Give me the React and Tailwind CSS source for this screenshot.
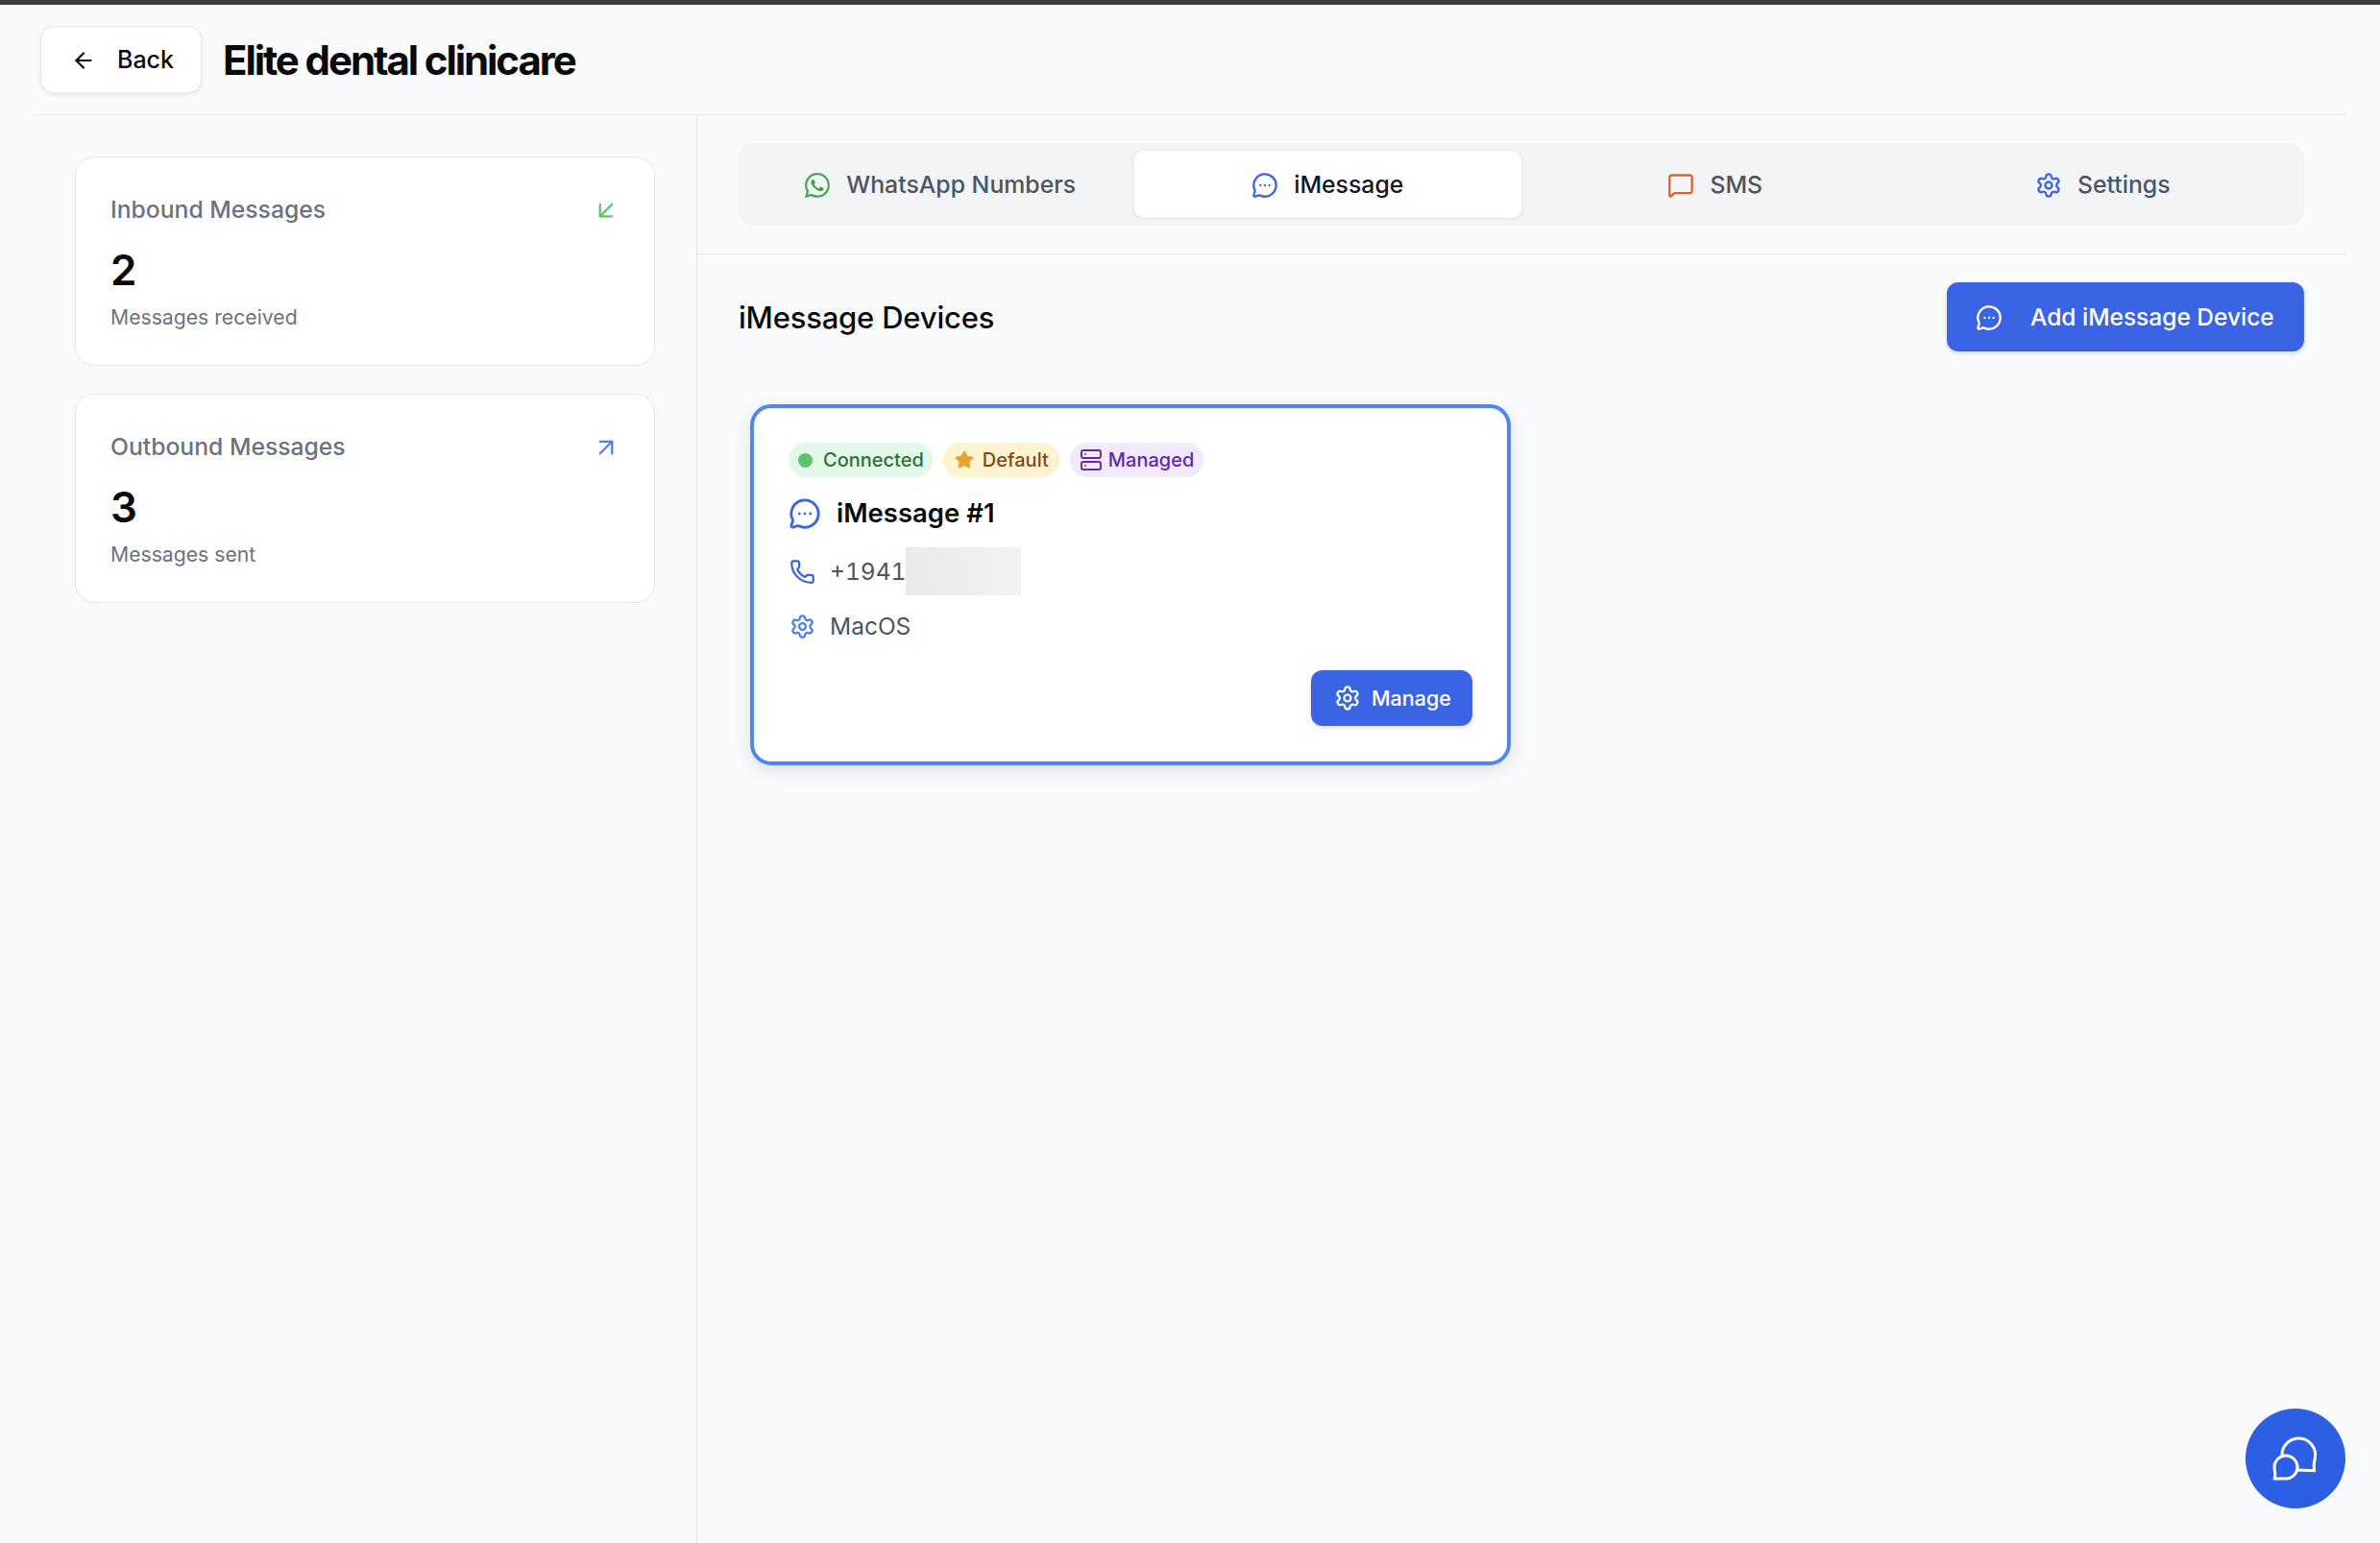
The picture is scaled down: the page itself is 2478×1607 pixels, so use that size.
import { ArrowLeft, ArrowDownLeft, ArrowUpRight, MessageCircleMore, MessageSquare, Settings, Phone, Star, Server } from "lucide-react"
import { BsWhatsapp } from "react-icons/bs"

function StatCard({ title, value, note, icon }) {
    return (
        <div className="h-[218px] rounded-[20px] border border-[#e5e7eb] bg-white pl-[36px] pr-[35px] pt-[35px]">
            <div className="flex h-[40px] items-center justify-between">
                <span className="text-[24.7px] font-medium text-[#6b7280]">{title}</span>
                {icon}
            </div>
            <div className="mt-[22px] text-[44px] leading-[40px] font-semibold text-[#0a0a0a]">{value}</div>
            <div className="mt-[14px] text-[21.2px] leading-[30px] text-[#6b7280]">{note}</div>
        </div>
    )
}

function Tab({ icon, label, active }) {
    return (
        <button className={`flex h-[70px] items-center justify-center gap-[16px] rounded-[10px] pt-[2px] text-[24.8px] font-medium ${active ? "bg-white text-[#111827] shadow-[0_1px_4px_rgba(0,0,0,0.1)]" : "text-[#4b5563]"}`}>
            {icon}
            {label}
        </button>
    )
}

function Badge({ className, icon, label }) {
    return (
        <span className={`flex h-[36px] items-center rounded-full text-[20px] font-medium ${className}`}>
            {icon}
            {label}
        </span>
    )
}

function App() {
    return (
        <div className="relative flex h-screen flex-col overflow-hidden bg-[#f9fafc] font-['Inter',sans-serif]">
            <div className="h-[5px] bg-[#3b3b3b]"></div>

            <header className="ml-[35px] mr-[37px] flex h-[115px] items-center gap-[22px] border-b border-[#e5e7eb] pl-[7px]">
                <button className="flex h-[70px] w-[168px] items-center gap-[22px] rounded-[14px] border border-[#e5e7eb] bg-white pl-[31px] pt-[2px] text-[25px] font-medium text-[#0a0a0a] shadow-[0_2px_4px_rgba(0,0,0,0.08)]">
                    <ArrowLeft size={26} strokeWidth={2} />
                    Back
                </button>
                <h1 className="pt-[1px] text-[42px] font-bold tracking-[-2.1px] text-[#0a0a0a]">Elite dental clinicare</h1>
            </header>

            <div className="ml-[35px] mr-[37px] flex min-h-0 flex-1">
                <aside className="flex w-[691px] flex-col gap-[29px] border-r border-[#e5e7eb] pl-[43px] pr-[43px] pt-[43px]">
                    <StatCard
                        title="Inbound Messages"
                        value="2"
                        note="Messages received"
                        icon={<ArrowDownLeft size={30} strokeWidth={1.8} className="text-[#5cc46c]" />}
                    />
                    <StatCard
                        title="Outbound Messages"
                        value="3"
                        note="Messages sent"
                        icon={<ArrowUpRight size={30} strokeWidth={1.8} className="text-[#4f7cf0]" />}
                    />
                </aside>

                <main className="min-w-0 flex-1">
                    <div className="border-b border-[#e5e7eb] pb-[29px] pl-[43px] pr-[42px] pt-[29px]">
                        <div className="grid h-[86px] grid-cols-4 items-center rounded-[18px] bg-[#f3f4f6] px-[8px]">
                            <Tab label="WhatsApp Numbers" icon={<BsWhatsapp size={26} className="mx-[1px] text-[#3da556]" />} />
                            <Tab active label="iMessage" icon={<MessageCircleMore size={28} strokeWidth={2} className="text-[#3b64e5]" />} />
                            <Tab label="SMS" icon={<MessageSquare size={28} strokeWidth={2} className="text-[#e0622b]" />} />
                            <Tab label="Settings" icon={<Settings size={28} strokeWidth={2} className="text-[#3b64e5]" />} />
                        </div>
                    </div>

                    <div className="pl-[43px] pr-[42px] pt-[29px]">
                        <div className="flex items-center justify-between">
                            <h2 className="pt-[2px] text-[31px] font-medium tracking-[-0.2px] text-[#0a0a0a]">iMessage Devices</h2>
                            <button className="flex h-[72px] w-[372px] items-center gap-[29px] rounded-[12px] bg-[#3b64e5] pl-[30px] pt-[1px] text-[24.5px] font-medium text-white shadow-[0_2px_5px_rgba(0,0,0,0.15)]">
                                <MessageCircleMore size={28} strokeWidth={2} />
                                Add iMessage Device
                            </button>
                        </div>

                        <div className="ml-[12px] mt-[55px] h-[376px] w-[792px] rounded-[22px] border-4 border-[#5285f0] bg-white pl-[36px] pr-[36px] pt-[36px] shadow-[0_6px_18px_rgba(0,0,0,0.1)]">
                            <div className="flex gap-[11px]">
                                <Badge
                                    className="gap-[11px] bg-[#e2f8e8] pl-[10px] pr-[9px] text-[#2c6e3e]"
                                    icon={<span className="h-[15px] w-[15px] rounded-full bg-[#5bc46a]"></span>}
                                    label="Connected"
                                />
                                <Badge
                                    className="gap-[9px] bg-[#fdf4cf] pl-[12px] pr-[11px] text-[#85451d]"
                                    icon={<Star size={20} strokeWidth={2} className="fill-[#ee9e35] text-[#ee9e35]" />}
                                    label="Default"
                                />
                                <Badge
                                    className="gap-[6px] bg-[#f1e9fd] pl-[10px] pr-[10px] text-[#6426a8]"
                                    icon={<Server size={24} strokeWidth={1.9} />}
                                    label="Managed"
                                />
                            </div>

                            <div className="mt-[17px] flex items-center gap-[16px]">
                                <MessageCircleMore size={34} strokeWidth={2} className="text-[#3b64e5]" />
                                <span className="text-[27.5px] font-semibold text-[#0a0a0a]">iMessage #1</span>
                            </div>

                            <div className="relative mt-[20px] flex h-[40px] items-center gap-[15px] text-[24.5px] tabular-nums text-[#4b5563]">
                                <Phone size={27} strokeWidth={2} className="ml-[1px] text-[#3b64e5]" />
                                <span>+19411</span>
                                <div className="absolute left-[122px] top-[-5px] h-[50px] w-[120px] bg-gradient-to-r from-[#e8e9eb] to-[#f3f3f3]"></div>
                            </div>

                            <div className="mt-[22px] flex h-[30px] items-center gap-[15px] text-[24.5px] text-[#4b5563]">
                                <Settings size={27} strokeWidth={2} className="ml-[1px] text-[#4f7cf0]" />
                                <span>MacOS</span>
                            </div>

                            <div className="mt-[31px] flex justify-end">
                                <button className="flex h-[58px] w-[168px] items-center gap-[11px] rounded-[12px] bg-[#3b64e5] pl-[24px] text-[21.5px] font-medium text-white shadow-[0_2px_5px_rgba(0,0,0,0.15)]">
                                    <Settings size={28} strokeWidth={1.9} />
                                    Manage
                                </button>
                            </div>
                        </div>
                    </div>
                </main>
            </div>

            <button className="absolute bottom-[36px] right-[36px] flex h-[104px] w-[104px] items-center justify-center rounded-full bg-[#2c5fe3] text-white">
                <svg width="50" height="50" viewBox="193 160 150 150" fill="none" stroke="currentColor" strokeWidth="9" strokeLinecap="round" strokeLinejoin="round">
                    <path d="M226 226A52 52 0 0 1 330 222C330 240 322 252 327 273L277 271" />
                    <path d="M238 226A36 36 0 0 1 274 262A36 36 0 0 1 238 298L202 298C208 285 202 275 202 262A36 36 0 0 1 238 226Z" />
                </svg>
            </button>
        </div>
    )
}

export default App
